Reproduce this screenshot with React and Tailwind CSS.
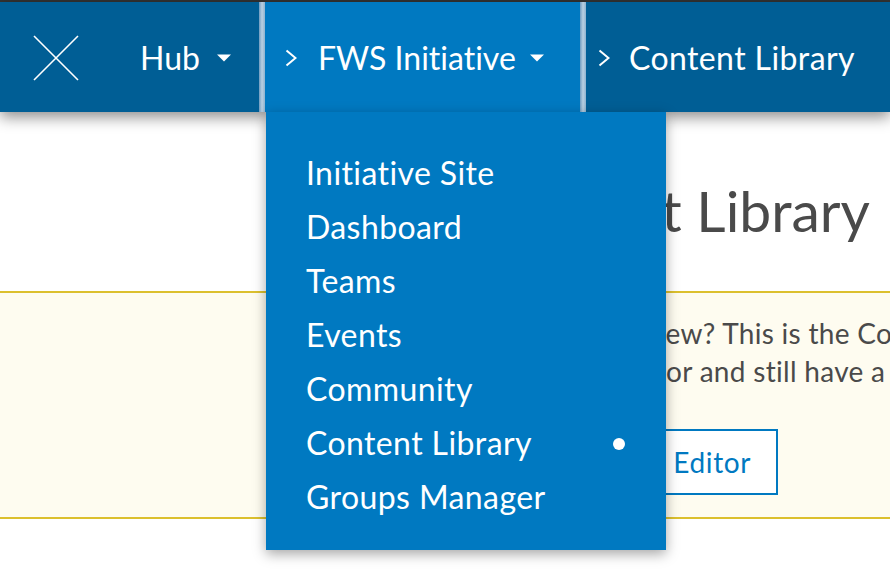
import React from "react";

const font = "font-['Lato','Noto_Sans',sans-serif]";

const menu = ["Initiative Site", "Dashboard", "Teams", "Events", "Community", "Content Library", "Groups Manager"];

function Caret({ className }) {
  return (
    <svg width="14" height="8" viewBox="0 0 14 8" className={`mt-[2px] shrink-0 ${className}`}>
      <path d="M0 0.5h14L7 7.5z" fill="#fff" />
    </svg>
  );
}

function Chevron({ className }) {
  return (
    <svg width="12" height="18" viewBox="0 0 12 18" className={`mt-[2px] shrink-0 ${className}`}>
      <path d="M1.5 1.5L10.5 9l-9 7.5" stroke="#fff" strokeWidth="2" fill="none" />
    </svg>
  );
}

function Divider() {
  return <div className="h-full w-[6px] shrink-0 bg-linear-to-r from-[#6f9cc0] via-[#b9cfe1] to-[#8fb3cf]" />;
}

export default function App() {
  return (
    <div className={`${font} relative h-[582px] w-[890px] overflow-hidden bg-white [font-variant-ligatures:none]`}>
      <div className="h-[2px] bg-[#333]" />
      <header className="relative z-10 flex h-[110px] items-center bg-[#005e95] shadow-[0_5px_14px_rgba(0,0,0,0.45)]">
        <svg width="46" height="46" viewBox="0 0 46 46" className="ml-[33px] mt-[2px] shrink-0">
          <path d="M1 1l44 44M45 1L1 45" stroke="#fff" strokeWidth="1.6" fill="none" />
        </svg>
        <span className="ml-[61px] mt-[2px] w-[59px] text-[32px] leading-none text-white">Hub</span>
        <Caret className="ml-[18px]" />
        <div className="ml-[28px] h-full">
          <Divider />
        </div>
        <div className="flex h-full w-[315px] shrink-0 items-center bg-[#0079c1]">
          <Chevron className="ml-[20px]" />
          <span className="ml-[21px] mt-[2px] w-[194px] whitespace-nowrap text-[32px] leading-none text-white">FWS Initiative</span>
          <Caret className="ml-[18px]" />
        </div>
        <Divider />
        <Chevron className="ml-[12px]" />
        <span className="ml-[19px] mt-[2px] whitespace-nowrap text-[32px] leading-none tracking-[0.4px] text-white">Content Library</span>
      </header>

      <main className="whitespace-nowrap pt-[66px] text-[#4a4a4a]">
        <h1 className="pr-[20px] text-right text-[57px] font-normal leading-[64px]">Content Library</h1>
        <div className="mt-[49px] h-[228px] overflow-hidden border-y-2 border-[#dcc02e] bg-[#fefcf0] pl-[366px] pt-[21px] text-[28px] leading-[38px] tracking-[0.3px]">
          <p className="ml-[9px]">Looking for the older view? This is the Content Library</p>
          <p className="ml-[-3px]">If you are an administrator and still have a question</p>
          <button className="mt-[39px] block h-[66px] w-[412px] border-2 border-[#0079c1] bg-white pr-[25px] text-right text-[28px] tracking-[0.6px] text-[#0079c1]">Open in Editor</button>
        </div>
      </main>

      <nav className="absolute left-[266px] top-[112px] z-20 flex h-[438px] w-[400px] flex-col bg-[#0079c1] pl-[40px] pt-[34px] shadow-[0_4px_12px_rgba(0,0,0,0.35)]">
        {menu.map((m) => (
          <a key={m} className="relative block h-[54px] text-[32px] leading-[54px] tracking-[0.4px] text-white">
            {m}
            {m === "Content Library" && <span className="absolute right-[41px] top-[22px] h-[12px] w-[12px] rounded-full bg-white" />}
          </a>
        ))}
      </nav>
    </div>
  );
}
